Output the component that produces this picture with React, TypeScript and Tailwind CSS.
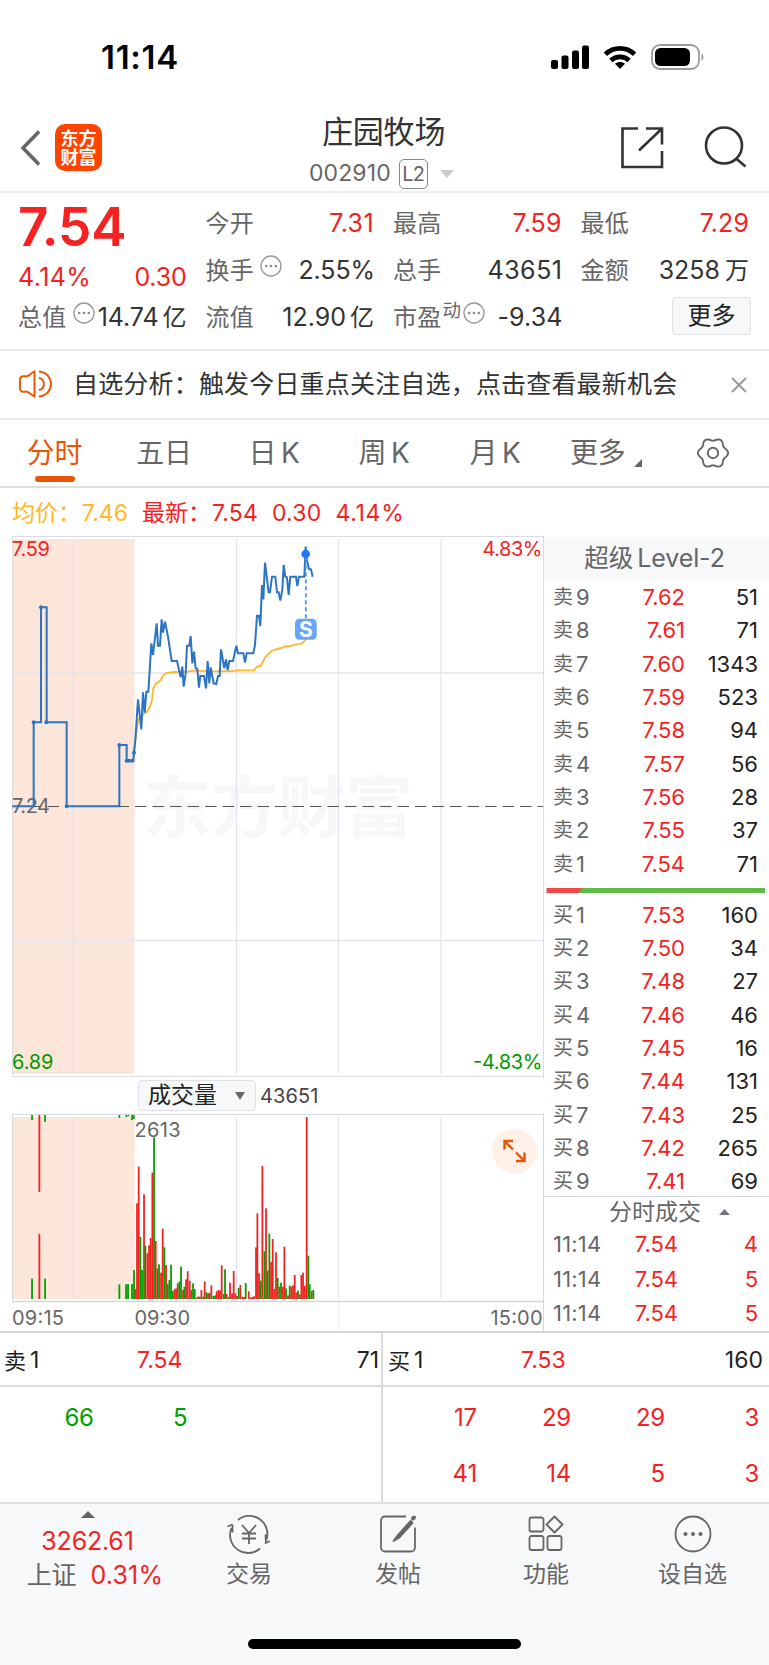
import React from "react";

const FONT = "font-['Inter','Noto_Sans_CJK_SC',sans-serif]";

type Level = [string, string, string];

const asks: Level[] = [
  ["9", "7.62", "51"],
  ["8", "7.61", "71"],
  ["7", "7.60", "1343"],
  ["6", "7.59", "523"],
  ["5", "7.58", "94"],
  ["4", "7.57", "56"],
  ["3", "7.56", "28"],
  ["2", "7.55", "37"],
  ["1", "7.54", "71"],
];

const bids: Level[] = [
  ["1", "7.53", "160"],
  ["2", "7.50", "34"],
  ["3", "7.48", "27"],
  ["4", "7.46", "46"],
  ["5", "7.45", "16"],
  ["6", "7.44", "131"],
  ["7", "7.43", "25"],
  ["8", "7.42", "265"],
  ["9", "7.41", "69"],
];

const trades = [
  ["11:14", "7.54", "4"],
  ["11:14", "7.54", "5"],
  ["11:14", "7.54", "5"],
];

// Series are kept in thirds of a pixel.
const pricePoints =
  "37,829 101,829 101,577 123,577 123,232 140,232 140,577 200,577 200,829 358,829 358,645 380,645 380,692 400,692 402,668 406,630 414,508 424,598 429,487 434,548 439,485 445,485 454,340 459,375 470,280 474,347 480,347 485,268 489,308 495,275 504,320 515,393 531,393 542,442 547,410 551,470 557,430 561,347 568,347 572,318 577,400 582,365 587,415 592,417 597,473 601,438 612,438 618,475 623,393 628,460 632,412 641,460 649,462 654,438 659,438 663,358 673,415 678,388 683,420 688,393 699,393 709,347 714,370 730,370 735,398 740,370 760,370 765,345 771,257 777,257 781,288 786,165 790,208 795,98 806,187 810,187 816,140 826,140 831,187 836,187 841,212 847,180 851,105 856,140 861,142 866,195 871,140 888,140 892,168 897,140 913,140 917,50 920,88 927,117 933,118 938,140";
const avgPoints =
  "402,668 410,600 415,568 425,561 430,553 440,547 450,530 456,510 460,475 466,463 480,453 490,436 500,429 525,426 565,425 575,422 640,424 700,423 710,421 762,421 770,411 782,408 795,383 805,372 815,363 830,357 845,354 855,349 870,348 885,344 905,341 915,332 920,322 938,318";
const knots = [
  [101, 577], [123, 232], [139, 577], [200, 829], [358, 645], [380, 692], [387, 692], [397, 692], [402, 668],
];

const volumes =
  "g96:656 r118:522 g135:656 g358:673 g378:673 g384:672 g396:672 g402:630 r407:687 r411:430 r416:320 g421:531 g426:630 r432:403 g436:557 r442:580 r447:556 r452:534 r457:338 g462:232 r467:543 r472:625 g477:613 r483:638 r488:506 g493:562 r498:615 g503:672 g508:660 g513:614 g518:693 r523:688 r528:685 r533:670 g538:665 g543:620 r549:690 g553:680 r558:658 r563:634 r569:662 r574:690 g579:670 g584:687 r589:713 g594:710 r599:710 r604:690 g609:710 r614:664 g619:697 r624:700 g629:698 r634:676 g640:708 g645:706 r650:694 r655:690 r660:692 r665:616 g671:702 g675:628 r680:702 g686:711 r690:668 r696:700 r701:633 r706:700 r711:708 g716:684 r721:675 r727:710 r732:711 g737:669 r746:694 r752:712 r757:711 r762:709 r768:562 r772:460 r777:640 g782:662 r787:318 g793:574 r798:445 g803:632 g808:521 r813:606 r818:537 r823:687 r828:577 g833:654 r838:680 g843:668 r848:680 r853:560 g858:685 r864:706 g869:677 r874:680 r879:676 r884:645 r889:698 g894:692 r899:703 r904:645 r909:638 r914:678 r920:171 g925:587 g929:673 r935:693 g940:690"
    .split(" ")
    .map((s) => {
      const [x, top] = s.slice(1).split(":").map(Number);
      return { up: s[0] === "r", x, top };
    });
const hanging: [string, number, number][] = [
  ["#0a0", 96, 180], ["#f52222", 118, 396], ["#0a0", 135, 186], ["#0a0", 358, 174],
  ["#0a0", 379, 171], ["#0a0", 385, 169], ["#0a0", 396, 180], ["#0a0", 401, 177],
];

// Outline of a soft six-lobed gear.
const gearPoints = Array.from({ length: 120 }, (_, i) => {
  const a = (i * Math.PI) / 60;
  const r = 13.7 + 1.4 * Math.cos(6 * a);
  return (r * Math.cos(a)).toFixed(2) + "," + (r * Math.sin(a)).toFixed(2);
}).join(" ");

function Dots({ className = "" }: { className?: string }) {
  return (
    <svg viewBox="0 0 22 22" className={"size-[22px] shrink-0 " + className} fill="none">
      <circle cx="11" cy="11" r="10" stroke="#999" strokeWidth="1.4" />
      <g fill="#888">
        <circle cx="6.2" cy="11" r="1.3" />
        <circle cx="11" cy="11" r="1.3" />
        <circle cx="15.8" cy="11" r="1.3" />
      </g>
    </svg>
  );
}

function StatusBar() {
  return (
    <div className="flex h-[100px] items-start justify-between pl-[101px] pr-[64px] pt-[43px]">
      <div className="text-[33px] font-semibold leading-[28px] tracking-[0.700px] text-black">11:14</div>
      <svg viewBox="551 43 154 28" className="h-7 w-[154px]" fill="#000">
        <rect x="551" y="60" width="7" height="9" rx="2" />
        <rect x="561.5" y="55.5" width="7" height="13.5" rx="2" />
        <rect x="572" y="50.5" width="7" height="18.5" rx="2" />
        <rect x="582" y="45.5" width="7" height="23.5" rx="2" />
        <path d="M620 69l-5-5.2c2.8-2.4 7.2-2.4 10 0z" />
        <path d="M610.8 60.4c5.3-4.8 13.1-4.8 18.4 0M605.4 54.2c8.4-7.8 20.8-7.8 29.2 0" fill="none" stroke="#000" strokeWidth="4.8" />
        <rect x="652" y="45" width="47" height="24" rx="8" fill="none" stroke="#9b9b9b" strokeWidth="1.8" />
        <rect x="655" y="48" width="35" height="18" rx="5.5" />
        <path d="M701.5 53.5c2.6 1 2.6 6.2 0 7.2z" fill="#9b9b9b" />
      </svg>
    </div>
  );
}

function Header() {
  return (
    <div className="grid h-[93px] grid-cols-[309px_1fr_148px] border-b-2 border-[#eee]">
      <div className="flex items-start pl-5 pt-6">
        <svg viewBox="0 0 22 36" className="mt-[6px] h-9 w-[22px]" fill="none" stroke="#666" strokeWidth="3.6">
          <path d="M19 1.5L3 18l16 16.500" />
        </svg>
        <div className="ml-[13px] flex size-[47px] flex-col items-center justify-center rounded-[10px] bg-[#ff4400] text-[18px] font-bold leading-[19px] text-white">
          <span>东方</span>
          <span>财富</span>
        </div>
      </div>
      <div className="flex flex-col">
        <div className="mt-[15px] pl-[13px] text-[31px] leading-[34px] tracking-[-0.2px] text-[#333]">庄园牧场</div>
        <div className="mt-[9px] flex h-[31px] items-center">
          <span className="text-[23px] tracking-[0.1px] text-[#666]">002910</span>
          <span className="ml-[8px] flex h-[30px] w-[29px] items-center justify-center rounded-[5px] border border-[#888] text-[20px] tracking-[-0.6px] text-[#666]">
            L2
          </span>
          <svg viewBox="0 0 14 8" className="ml-[12px] h-2 w-[14px]" fill="#ccc">
            <path d="M0 0h14L7 8z" />
          </svg>
        </div>
      </div>
      <svg viewBox="621 124 148 48" className="mt-6 h-12 w-[148px]" fill="none" stroke="#333" strokeWidth="2.6">
        <path d="M638 128.500h-15.500v38.500h39.500v-16M646 128.500h16v16M662 128.500l-23 22" />
        <circle cx="724" cy="145.500" r="18" />
        <path d="M736 158.500l9.500 8" />
      </svg>
    </div>
  );
}

const quoteRow = "flex h-[47px] items-center justify-between text-[25px] leading-none tracking-[0px] text-[#333]";
const lbl = "text-[24px] tracking-[0.2px] text-[#666]";

function Quote() {
  return (
    <div className="grid h-[158px] grid-cols-4 gap-x-[19px] border-b-2 border-[#ececec] pl-[18px] pr-[20px] pt-[7px]">
      <div className="whitespace-nowrap text-[#f52222]">
        <div className="h-[56px] text-[53px] font-semibold leading-[54px] tracking-[-0.100px]">7.54</div>
        <div className="flex h-[38px] items-center justify-between pt-1 text-[25px] leading-none">
          <span className="tracking-[0.4px]">4.14%</span>
          <span className="tracking-[-0.2px]">0.30</span>
        </div>
        <div className={quoteRow}>
          <span className={lbl}>总值</span>
          <Dots className="ml-[4px] mb-[10px]" />
          <span className="tracking-[-0.050px]">14.74<span className="ml-[4px] text-[24px]">亿</span></span>
        </div>
      </div>
      <div>
        <div className={quoteRow}><span className={lbl}>今开</span><span className="tracking-[0.4px] text-[#f52222]">7.31</span></div>
        <div className={quoteRow}>
          <span className="flex items-center"><span className={lbl}>换手</span><Dots className="mb-[10px] ml-[6px]" /></span>
          <span className="mr-[-1px] tracking-[-0.1px]">2.55%</span>
        </div>
        <div className={quoteRow}><span className={lbl}>流值</span><span>12.90<span className="ml-[4px] text-[24px]">亿</span></span></div>
      </div>
      <div>
        <div className={quoteRow}><span className={lbl}>最高</span><span className="tracking-[0.1px] text-[#f52222]">7.59</span></div>
        <div className={quoteRow}><span className={lbl}>总手</span><span className="mr-[-1px] tracking-[0.5px]">43651</span></div>
        <div className={quoteRow}>
          <span className="flex items-center">
            <span className={lbl}>市盈</span>
            <span className="mb-[14px] ml-px text-[18.500px] text-[#666]">动</span>
            <Dots className="mb-[10px] ml-[2px]" />
          </span>
          <span className="mr-[-1px] tracking-[0.1px]">-9.34</span>
        </div>
      </div>
      <div>
        <div className={quoteRow}><span className={lbl}>最低</span><span className="tracking-[0.1px] text-[#f52222]">7.29</span></div>
        <div className={quoteRow}><span className={lbl}>金额</span><span>3258<span className="ml-[5px] text-[24px]">万</span></span></div>
        <div className="mr-[-2px] flex h-[44px] items-center justify-end">
          <button className="h-[38px] w-[79px] rounded border border-[#dfe1e6] bg-[#f7f8fa] text-[24px] leading-none text-[#222]">更多</button>
        </div>
      </div>
    </div>
  );
}

function Notice() {
  return (
    <div className="flex h-[69px] items-center border-b-2 border-[#ececec] pl-[18px] pr-[21px] text-[#333]">
      <svg viewBox="0 0 36 30" className="mt-[-1px] h-[30px] w-9" fill="none" stroke="#ea5504" strokeWidth="1.9" strokeLinejoin="round">
        <path d="M16.500 2.200v25.600l-7-5H5.500c-2.500 0-3.500-1.500-3.500-3.500v-8.600c0-2 1-3.500 3.500-3.500h4z" />
        <path d="M21 2.500c16 1.500 16 23.500 0 25M21 9c6.500 1 6.500 11 0 12" />
      </svg>
      <span className="ml-[19px] whitespace-nowrap text-[25px] leading-none tracking-[0.18px]">自选分析：触发今日重点关注自选，点击查看最新机会</span>
      <svg viewBox="0 0 18 18" className="ml-auto size-[18px]" fill="none" stroke="#999" strokeWidth="2">
        <path d="M2 2l14 14M16 2L2 16" />
      </svg>
    </div>
  );
}

function Tabs() {
  return (
    <div className="grid h-[68px] grid-cols-[109px_110px_110px_110px_112px_117px_101px] border-b-2 border-[#dcdee2] text-[28px] leading-none tracking-[-0.3px] text-[#666]">
      <div className="relative flex items-center justify-center text-[#ea5504]">
        分时
        <span className="absolute bottom-[4px] left-[35px] h-[6px] w-10 rounded-full bg-[#ea5504]" />
      </div>
      <div className="flex items-center justify-center">五日</div>
      <div className="flex items-center justify-center gap-[5px]"><span>日</span><span>K</span></div>
      <div className="flex items-center justify-center gap-[5px]"><span>周</span><span>K</span></div>
      <div className="flex items-center justify-center gap-[5px]"><span>月</span><span>K</span></div>
      <div className="flex items-center pl-[19px]">
        更多
        <svg viewBox="0 0 8 8" className="ml-[9px] mt-[20px] size-2" fill="#666"><path d="M8 0v8H0z" /></svg>
      </div>
      <div className="flex items-center pl-[29px]">
        <svg viewBox="-16 -16 32 32" className="mt-[-1px] size-8" fill="none" stroke="#666" strokeWidth="1.9" strokeLinejoin="round">
          <circle r="5.2" />
          <polygon points={gearPoints} />
        </svg>
      </div>
    </div>
  );
}

function PriceChart() {
  return (
    <svg viewBox="0 536 544 543" className="block h-[543px] w-[544px]" fontSize="20">
      <rect x="13" y="539" width="121.500" height="535" fill="#fce6da" />
      <g fill="#f7f7f8" fontWeight="700" fontSize="68">
        <text x="143" y="832" textLength="270">东方财富</text>
      </g>
      <g stroke="#e2e5ec" strokeWidth="1.300">
        <path d="M73 539v535M236.500 539v535M338.500 539v535M441 539v535" />
        <path d="M12 673h532M12 940.500h532" strokeWidth="1.700" />
        <path d="M12 536.500h532M12 1076.500h532M12.500 536v541M543.500 536v543" stroke="#d9dce2" strokeWidth="1" />
      </g>
      <path d="M12.500 806.500H543" stroke="#555" strokeWidth="1.200" strokeDasharray="11.500 6" />
      <text x="12" y="813" fill="#666" textLength="38">7.24</text>
      <g transform="translate(0 530) scale(.33333)" fill="none" strokeLinejoin="miter" strokeMiterlimit="3">
        <polyline points={avgPoints} stroke="#ffb72b" strokeWidth="5.500" strokeLinejoin="round" />
        <polyline points={pricePoints} stroke="#2c74c4" strokeWidth="6" />
        {knots.map(([x, y]) => (
          <circle key={x} cx={x} cy={y} r="6" fill="#2c74c4" />
        ))}
        <path d="M917.500 85v180" stroke="#4a94f8" strokeWidth="5.500" strokeDasharray="12 9" />
        <circle cx="917" cy="72" r="13" fill="#2079f2" />
        <rect x="885" y="266" width="65" height="63" rx="13" fill="#65a6fb" />
      </g>
      <text x="305.800" y="637" fill="#fff" fontSize="21" fontWeight="700" textAnchor="middle">S</text>
      <text x="12" y="556" fill="#f52222" textLength="38">7.59</text>
      <text x="482.500" y="556" fill="#f52222" textLength="60">4.83%</text>
      <text x="12" y="1069" fill="#090" textLength="41.500">6.89</text>
      <text x="473" y="1069" fill="#090" textLength="69.500">-4.83%</text>
    </svg>
  );
}

function VolumeChart() {
  return (
    <svg viewBox="0 1114 544 217" className="block h-[217px] w-[544px]" fontSize="20">
      <rect x="13" y="1117" width="121.500" height="182" fill="#fce6da" />
      <path d="M73 1117v182M236.500 1117v182M338.500 1117v182M441 1117v182" stroke="#e2e5ec" strokeWidth="1.300" />
      <path d="M12 1114.500h532M12.500 1114v187M543.500 1114v217" stroke="#d6d8df" />
      <path d="M338.500 1302v29" stroke="#eceef2" />
      <path d="M12 1301.500h532" stroke="#d2d5dc" strokeWidth="1.600" />
      <g transform="translate(0 1060) scale(.33333)">
        {volumes.map(({ up, x, top }) => (
          <rect key={x} x={x - 2.6} y={top} width="5.400" height={717 - top} fill={up ? "#f52222" : "#00a000"} />
        ))}
        {hanging.map(([c, x, end]) => (
          <rect key={x} x={x - 2.6} y="165" width="5.400" height={end - 165} fill={c} />
        ))}
      </g>
      <text x="134.500" y="1136.500" fill="#666" textLength="46">2613</text>
      <g fill="#666">
        <text x="12" y="1324.500" textLength="52">09:15</text>
        <text x="134.500" y="1324.500" textLength="55.500">09:30</text>
        <text x="490.500" y="1324.500" textLength="52">15:00</text>
      </g>
      <circle cx="514.500" cy="1151" r="22.500" fill="#fff0e8" />
      <path d="M504.500 1149.500v-8.500h8.500M505 1141.500l8 8M524.500 1152.500v8.500h-8.500M524 1160.500l-8-8" fill="none" stroke="#ea5504" strokeWidth="2.400" />
    </svg>
  );
}

function BookRow({ side, level, low }: { side: string; level: Level; low?: boolean }) {
  return (
    <div className={"flex h-[33.3px] items-center pl-[9px] pr-[11px] text-[22px] leading-none tracking-[0px] " + (low ? "pt-[3px]" : "pt-[1px]")}>
      <span className="flex w-[52px] items-center gap-[3px] text-[#666]"><span className="text-[20px]">{side}</span><span>{level[0]}</span></span>
      <span className="w-[80px] text-right text-[#f52222]">{level[1]}</span>
      <span className="flex-1 text-right text-[#222]">{level[2]}</span>
    </div>
  );
}

function OrderBook() {
  return (
    <div className="flex w-[225px] flex-col">
      <div className="mt-px flex h-[43px] shrink-0 items-center justify-center gap-1 bg-[#f7f8fa] pr-[4px] text-[25px] leading-none text-[#666]">
        <span className="text-[24.500px]">超级</span><span className="tracking-[-0.1px]">Level-2</span>
      </div>
      <div>{asks.map((l) => <BookRow key={l[0]} side="卖" level={l} />)}</div>
      <svg viewBox="0 0 225 17" className="h-[17px] w-[225px] shrink-0">
        <path d="M2.500 8H40l-5 5H2.500z" fill="#f04848" />
        <path d="M40 8h181v5H35q1-4 5-5z" fill="#5dbb46" />
      </svg>
      <div>{bids.map((l) => <BookRow key={l[0]} side="买" level={l} low />)}</div>
      <div className="flex h-[31px] shrink-0 items-center border-t border-[#d6d8df] pl-[65px] text-[23px] leading-none text-[#666]">
        分时成交
        <svg viewBox="0 0 11 6" className="ml-[18px] h-[6px] w-[11px]" fill="#75757d"><path d="M5.500 0L11 6H0z" /></svg>
      </div>
      {trades.map(([t, p, v], i) => (
        <div key={i} className="flex h-[34.300px] shrink-0 items-center pl-[9px] pr-[11px] text-[22px] leading-none">
          <span className="w-[50px] tracking-[0.200px] text-[#666]">{t}</span>
          <span className="w-[75px] text-right text-[#f52222]">{p}</span>
          <span className="flex-1 text-right text-[#f52222]">{v}</span>
        </div>
      ))}
    </div>
  );
}

function DepthSide({ side, price, total, rows, color, first }: { side: string; price: string; total: string; rows: string[][]; color: string; first: boolean }) {
  return (
    <div className={first ? "w-[383px] border-r-2 border-[#d8dae0]" : "w-[386px]"}>
      <div className={"flex h-[54px] items-center border-b-2 border-[#d8dae0] pt-[3px] text-[23px] leading-none tracking-[0px] text-[#222] " + (first ? "pl-[4px] pr-[2px]" : "pl-[5px] pr-[6px]")}>
        <span className="flex w-[133px] items-center gap-1"><span className="text-[22px]">{side}</span>1</span>
        <span className="text-[#f52222]">{price}</span>
        <span className="ml-auto">{total}</span>
      </div>
      <div className={"grid grid-cols-4 pt-[3px] text-right text-[24px] leading-none tracking-[-0.2px] " + (first ? "w-[375px] " : "w-[376px] ") + color}>
        {rows.flat().map((v, i) => (
          <div key={i} className="flex h-[56px] items-center justify-end">{v}</div>
        ))}
      </div>
    </div>
  );
}

function FooterItem({ label, children }: { label: string; children: React.ReactNode }) {
  return (
    <div className="flex flex-col items-center">
      <svg viewBox="-22 -22 44 44" className="mt-[8px] size-11" fill="none" stroke="#666" strokeWidth="1.800" strokeLinejoin="round">
        {children}
      </svg>
      <span className="mt-[5px] text-[23px] leading-[26px] text-[#666]">{label}</span>
    </div>
  );
}

function Footer() {
  return (
    <div className="relative h-[163px] border-t-2 border-[#dcdee3] bg-[#f7f8fa]">
      <div className="grid grid-cols-[175px_148px_150px_146px_147px]">
        <div className="flex flex-col items-center whitespace-nowrap text-[25px] leading-none tracking-[-0.2px]">
          <svg viewBox="0 0 14 7" className="mt-[7px] h-[7px] w-[14px]" fill="#666"><path d="M7 0l7 7H0z" /></svg>
          <span className="mt-[11px] text-[#f52222]">3262.61</span>
          <div className="mt-[9px] flex items-center gap-[14px] pl-[15px]">
            <span className="text-[#666]">上证</span>
            <span className="tracking-[0.2px] text-[#f52222]">0.31%</span>
          </div>
        </div>
        <FooterItem label="交易">
          <path d="M-11-14A18 18 0 0 1 17.500 5.500M17 8.500l-.5-8M15.800 9.500l5-2.500M11 14.500A18 18 0 0 1-17.500-6M-16.500-9.500l-5 2M-16.500-9.500v8" />
          <path d="M-7-9L0-1l7-8M0-1v11M-7-.5H7M-7 4.500H7" />
        </FooterItem>
        <FooterItem label="发帖">
          <path d="M8-17.500h-21a4 4 0 0 0-4 4v27a4 4 0 0 0 4 4h26a4 4 0 0 0 4-4v-20" />
          <path d="M12.500-13L-.5 1.500l-4 5.500 6-3.500L14.500-11z" fill="#666" />
          <path d="M15-15.500l1-1" strokeWidth="4" strokeLinecap="round" />
        </FooterItem>
        <FooterItem label="功能">
          <rect x="-16.500" y="-16.500" width="14" height="14" rx="2" />
          <path d="M8.500-17.500l8 8-8 8-8-8z" />
          <rect x="-16.500" y="2" width="14" height="14" rx="2" />
          <rect x="1.500" y="2" width="14" height="14" rx="2" />
        </FooterItem>
        <FooterItem label="设自选">
          <circle r="17.500" />
          <g fill="#666" stroke="none"><circle cx="-7.500" r="2" /><circle r="2" /><circle cx="7.500" r="2" /></g>
        </FooterItem>
      </div>
      <div className="absolute bottom-[16px] left-[248px] h-[10px] w-[273px] rounded-full bg-black" />
    </div>
  );
}

export default function App() {
  return (
    <div className={"h-[1665px] w-[769px] overflow-hidden bg-white " + FONT}>
      <StatusBar />
      <Header />
      <Quote />
      <Notice />
      <Tabs />
      <div className="flex h-[48px] items-center whitespace-nowrap pl-[12px] pt-[2px] text-[23px] leading-none text-[#f52222]">
        <span className="flex items-center text-[#ffb72b]"><span className="w-[70px]">均价：</span>7.46</span>
        <span className="ml-[14px] w-[70px]">最新：</span>
        <span className="tracking-[0.200px]">7.54</span>
        <span className="ml-[14px] tracking-[0.200px]">0.30</span>
        <span className="ml-[14px] tracking-[0.700px]">4.14%</span>
      </div>
      <div className="flex h-[795px]">
        <div className="w-[544px]">
          <PriceChart />
          <div className="flex h-[35px] items-center pb-[2px] pl-[138px] leading-none">
            <div className="flex h-[31px] w-[118px] items-center justify-between rounded border border-[#dfe1e6] bg-[#f7f8fa] pl-[9px] pr-[10px] text-[23px] text-[#222]">
              成交量
              <svg viewBox="0 0 10 8" className="h-2 w-[10px]" fill="#666"><path d="M0 0h10L5 8z" /></svg>
            </div>
            <span className="ml-[4px] text-[20px] tracking-[0.100px] text-[#444]">43651</span>
          </div>
          <VolumeChart />
        </div>
        <OrderBook />
      </div>
      <div className="flex h-[171px] border-t-2 border-[#d2d5dc]">
        <DepthSide first side="卖" price="7.54" total="71" color="text-[#00a000]" rows={[["66", "5", "", ""]]} />
        <DepthSide first={false} side="买" price="7.53" total="160" color="text-[#f52222]" rows={[["17", "29", "29", "3"], ["41", "14", "5", "3"]]} />
      </div>
      <Footer />
    </div>
  );
}
